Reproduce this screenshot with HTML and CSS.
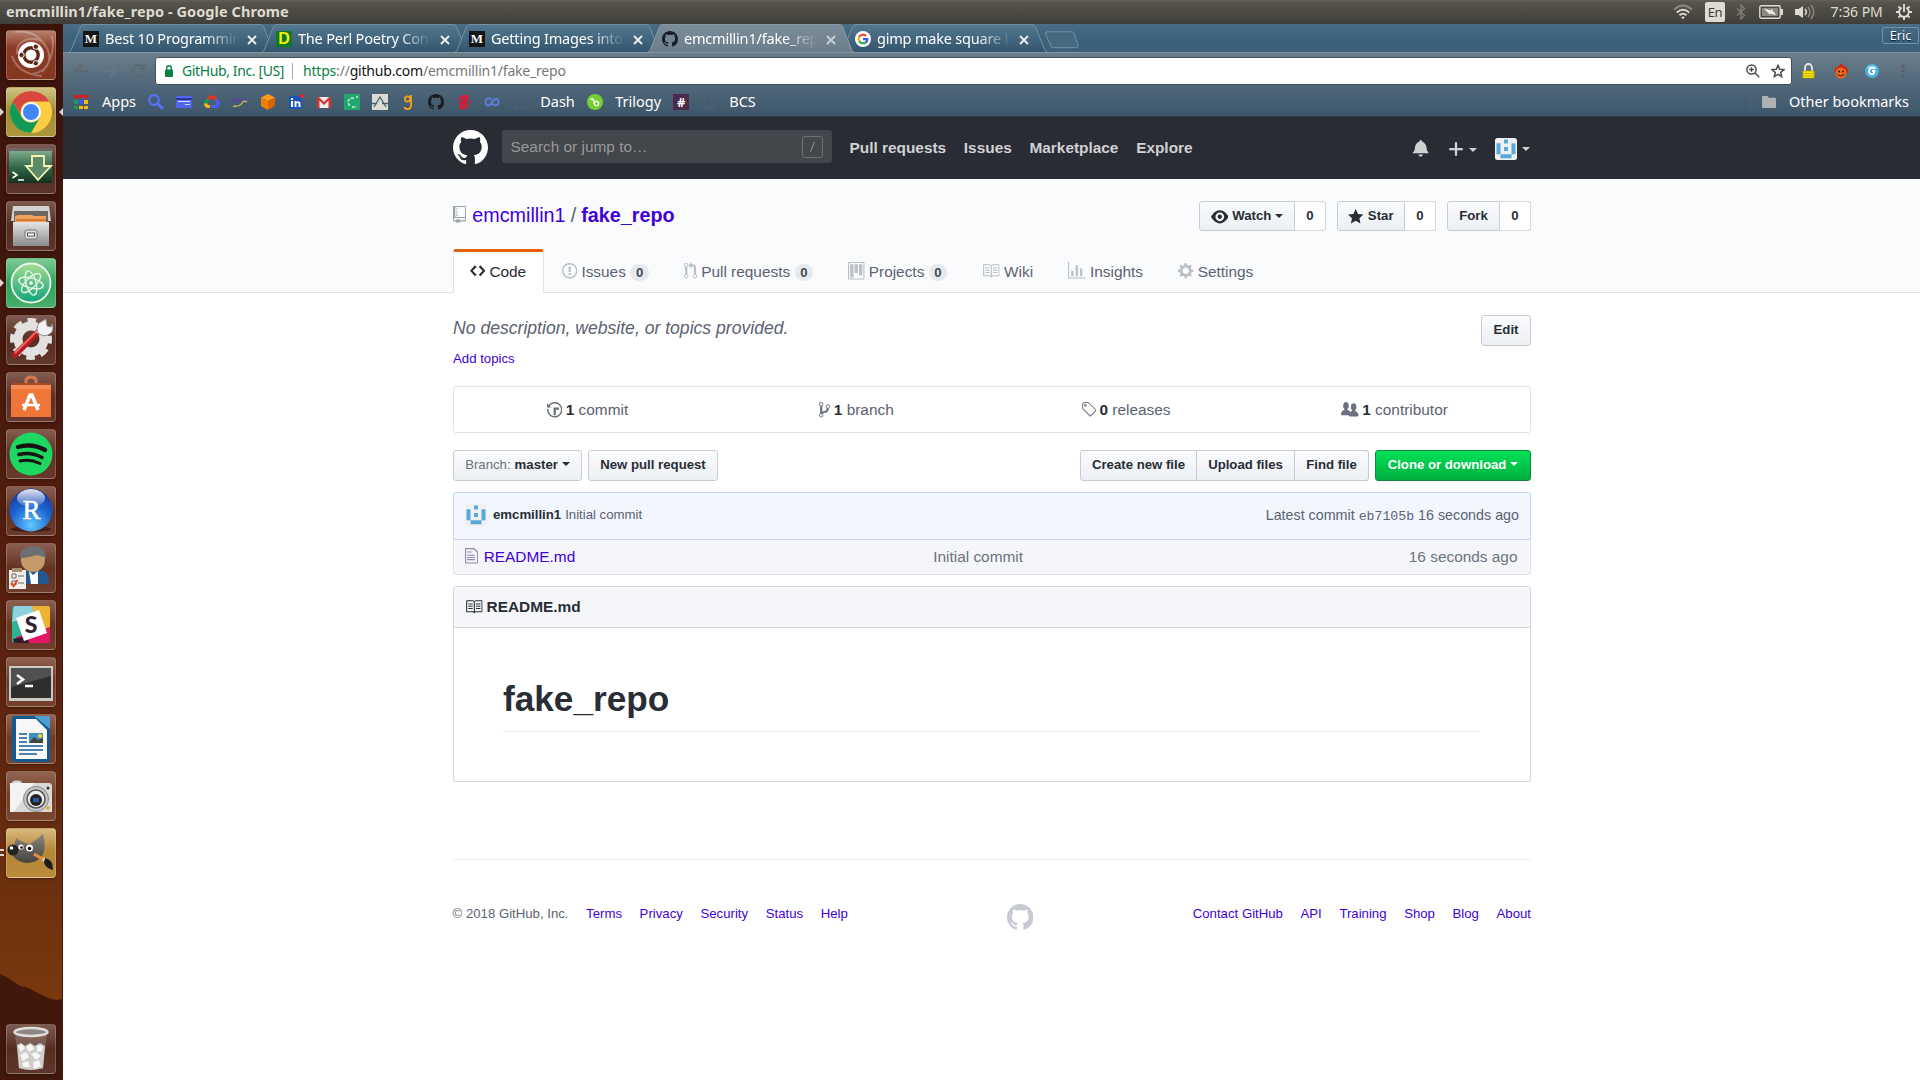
FILE: index.html
```html
<!DOCTYPE html>
<html lang="en">
<head>
<meta charset="utf-8">
<title>emcmillin1/fake_repo</title>
<link rel="stylesheet" href="styles.css">
</head>
<body>
<svg class="sprite" width="0" height="0" aria-hidden="true">
  <defs>
    <linearGradient id="g-tab" x1="0" y1="0" x2="0" y2="1"><stop offset="0" stop-color="#53788f"/><stop offset="1" stop-color="#33556d"/></linearGradient>
    <linearGradient id="g-tab-on" x1="0" y1="0" x2="0" y2="1"><stop offset="0" stop-color="#7b8d99"/><stop offset="1" stop-color="#6c7e8b"/></linearGradient>
    <linearGradient id="g-term" x1="0" y1="0" x2="0" y2="1"><stop offset="0" stop-color="#7fa98d"/><stop offset=".5" stop-color="#2f6a48"/><stop offset="1" stop-color="#16301f"/></linearGradient>
    <linearGradient id="g-grey" x1="0" y1="0" x2="0" y2="1"><stop offset="0" stop-color="#e4e4e4"/><stop offset="1" stop-color="#8c8c8c"/></linearGradient>
    <linearGradient id="g-atom" x1="0" y1="0" x2="0" y2="1"><stop offset="0" stop-color="#a5dd92"/><stop offset="1" stop-color="#11a37c"/></linearGradient>
    <radialGradient id="g-r" cx=".5" cy=".85" r=".8"><stop offset="0" stop-color="#63c8ff"/><stop offset=".6" stop-color="#1c64d0"/><stop offset="1" stop-color="#153a9c"/></radialGradient>
    <linearGradient id="g-shine" x1="0" y1="0" x2="0" y2="1"><stop offset="0" stop-color="#fff" stop-opacity=".9"/><stop offset="1" stop-color="#fff" stop-opacity=".1"/></linearGradient>
    <linearGradient id="g-gimp" x1="0" y1="0" x2="0" y2="1"><stop offset="0" stop-color="#8a867c"/><stop offset="1" stop-color="#45433e"/></linearGradient>
    <symbol id="mark" viewBox="0 0 16 16"><path d="M8 0C3.58 0 0 3.58 0 8c0 3.54 2.29 6.53 5.47 7.59.4.07.55-.17.55-.38 0-.19-.01-.82-.01-1.49-2.01.37-2.53-.49-2.69-.94-.09-.23-.48-.94-.82-1.13-.28-.15-.68-.52-.01-.53.63-.01 1.08.58 1.23.82.72 1.21 1.87.87 2.33.66.07-.52.28-.87.51-1.07-1.78-.2-3.64-.89-3.64-3.95 0-.87.31-1.59.82-2.15-.08-.2-.36-1.02.08-2.12 0 0 .67-.21 2.2.82.64-.18 1.32-.27 2-.27.68 0 1.36.09 2 .27 1.53-1.04 2.2-.82 2.2-.82.44 1.1.16 1.92.08 2.12.51.56.82 1.27.82 2.15 0 3.07-1.87 3.75-3.65 3.95.29.25.54.73.54 1.48 0 1.07-.01 1.93-.01 2.2 0 .21.15.46.55.38A8.013 8.013 0 0 0 16 8c0-4.42-3.58-8-8-8z"/></symbol>
    <symbol id="book" viewBox="0 0 16 16"><path d="M3 5h4v1H3V5zm0 3h4V7H3v1zm0 2h4V9H3v1zm11-5h-4v1h4V5zm0 2h-4v1h4V7zm0 2h-4v1h4V9zm2-6v9c0 .55-.45 1-1 1H9.5l-1 1-1-1H2c-.55 0-1-.45-1-1V3c0-.55.45-1 1-1h5.5l1 1 1-1H15c.55 0 1 .45 1 1zm-8 .5L7.5 3H2v9h6V3.5zm7-.5H9.5l-.5.5V12h6V3z"/></symbol>
    <symbol id="avatar" viewBox="0 0 22 22"><rect width="22" height="22" rx="2.5" fill="#f0f0f0"/><path fill="#57a9db" d="M9 1.500h4v4H9zM9 9h4v4H9zM1.500 5.200h4v11h-4zM16.500 5.200h4v11h-4zM5.500 16.200h11v4h-11z"/></symbol>
    <symbol id="tab-shape" viewBox="0 0 206 28"><path d="M0 28 L2 26.500 L11.500 2.500 Q12.500 .5 14.500 .5 H191.500 Q193.500 .5 194.500 2.500 L204 26.500 L206 28"/></symbol>
    <symbol id="page" viewBox="0 0 11 16"><path d="M.5 1.500h6l4 4v9H.5zM6.500 1.500v4h4" fill="none" stroke="#5b5f63"/></symbol>
  </defs>
</svg>

<header class="panel">
  <span class="panel-title">emcmillin1/fake_repo - Google Chrome</span>
  <div class="tray">
    <svg class="t-wifi" width="20" height="16" viewBox="0 0 20 16" fill="none" stroke-width="1.900"><path stroke="#8b887f" d="M1 5.500Q10-2.500 19 5.500"/><path stroke="#dfdbd2" d="M3.800 8.500Q10 3 16.200 8.500M6.500 11.300Q10 8.300 13.500 11.300"/><path fill="#dfdbd2" d="M8.200 13.200Q10 11.800 11.800 13.200L10 15.200z"/></svg>
    <span class="t-lang">En</span>
    <svg class="t-bt" width="10" height="16" viewBox="0 0 10 16" fill="none" stroke="#85827a" stroke-width="1.300"><path d="M1 4.500L8.500 11.500 5 15V1l3.500 3.500L1 11.500"/></svg>
    <svg class="t-bat" width="24" height="14" viewBox="0 0 24 14"><rect x=".8" y=".8" width="20.400" height="12.400" rx="1.500" fill="none" stroke="#dfdbd2" stroke-width="1.400"/><path fill="#dfdbd2" d="M21.500 4H24v6h-2.500z"/><path fill="#8b887f" d="M3 3h16v8H3z"/><path fill="#efece5" d="M5 3.500l7 2V3.500l5 6.500-6-1.500V10z"/></svg>
    <svg class="t-vol" width="20" height="16" viewBox="0 0 20 16" fill="none" stroke-width="1.500"><path fill="#dfdbd2" d="M0 5h3.500L8 2v12l-4.500-3H0z"/><path stroke="#dfdbd2" d="M10 5q2.500 3 0 6"/><path stroke="#8b887f" d="M13 3q4 5 0 10M16 1q5.500 7 0 14"/></svg>
    <span class="t-time">7:36 PM</span>
    <svg class="t-gear" width="16" height="16" viewBox="0 0 16 16" fill="none" stroke="#dfdbd2" stroke-width="1.900"><path d="M5.800 3.700A4.900 4.900 0 1 0 10.200 3.700"/><path d="M8 0v8M0 8h3M13 8h3M8 13v3M2.400 2.400l2 2M11.600 4.400l2-2M2.400 13.600l2-2M11.600 11.600l2 2"/></svg>
  </div>
</header>

<div class="desktop">
<aside class="launcher">
  <svg class="wall" width="63" height="120" viewBox="0 0 63 120"><path fill="#42180c" d="M0 14q8 3 14 8t12 5q12 6 20 10t17 2V120H0z"/></svg>
  <div class="tile t-dash"><svg viewBox="0 0 50 50"><g fill="none" stroke="#fff" stroke-opacity=".28" stroke-width="2"><path d="M11 24C9 10 28 4 38 13M9 2Q30-2 42 20Q48 40 26 44M6 26Q12 44 36 46M46 6Q50 26 36 42"/></g><circle cx="25" cy="25" r="13" fill="#fff"/><circle cx="25" cy="25" r="7.200" fill="none" stroke="#5b2614" stroke-width="3.400"/><g fill="#5b2614" stroke="#fff" stroke-width="1"><circle cx="15.500" cy="25" r="2.700"/><circle cx="29.800" cy="16.700" r="2.700"/><circle cx="29.800" cy="33.300" r="2.700"/></g></svg></div>
  <div class="tile t-chrome"><svg viewBox="0 0 50 50"><circle cx="25" cy="25" r="21" fill="#fc4"/><path fill="#d9463d" d="M6.800 14.500A21 21 0 0 1 43.200 14.500H25A10.500 10.500 0 0 0 15.500 29.500z"/><path fill="#129a57" d="M6.800 14.500A21 21 0 0 0 25 46L34 30.500A10.500 10.500 0 0 1 16 30.500z"/><circle cx="25" cy="25" r="10" fill="#fff"/><circle cx="25" cy="25" r="8" fill="#4286f5"/></svg></div>
  <div class="tile t-glass"><svg viewBox="0 0 50 50"><rect x="2" y="4" width="45" height="4" fill="#6b6764"/><rect x="3" y="7" width="43" height="32" fill="url(#g-term)"/><path d="M26 12h12v10h7L32 36 20 22h6z" fill="#5e8a68" stroke="#f5f7b4" stroke-width="1.800"/><path d="M6.500 28l4.500 3-4.500 3M12 36h6" fill="none" stroke="#fff" stroke-width="1.600"/></svg></div>
  <div class="tile t-glass"><svg viewBox="0 0 50 50"><path fill="#d2d2d2" d="M7 5h36l2 15H5z"/><path fill="#6d6763" d="M8 10h34v11H8z"/><path fill="#f0a35f" d="M9 15l3-1h14l2 1h12v6H9z"/><path fill="#d9792f" d="M10 18h30v2H10z"/><path fill="url(#g-grey)" d="M7 21h36v24H7z"/><rect x="19" y="29" width="12" height="9" rx="2" fill="#ddd" stroke="#777"/><rect x="21.500" y="32" width="7" height="3" fill="#fff" stroke="#555"/></svg></div>
  <div class="tile t-atom"><svg viewBox="0 0 50 50"><circle cx="25" cy="25" r="19.500" fill="url(#g-atom)" stroke="#e8f5ea" stroke-width="1.800"/><g fill="none" stroke="#e4f6e5" stroke-width="1.400"><ellipse cx="25" cy="25" rx="12.500" ry="5" transform="rotate(15 25 25)"/><ellipse cx="25" cy="25" rx="12.500" ry="5" transform="rotate(75 25 25)"/><ellipse cx="25" cy="25" rx="12.500" ry="5" transform="rotate(135 25 25)"/></g><circle cx="25" cy="25" r="1.800" fill="#fff"/></svg></div>
  <div class="tile t-glass"><svg viewBox="0 0 50 50"><circle cx="25" cy="24" r="13" fill="none" stroke="#e3e1df" stroke-width="9"/><circle cx="25" cy="24" r="18.500" fill="none" stroke="#e3e1df" stroke-width="5" stroke-dasharray="8.500 6.030" stroke-dashoffset="4"/><path d="M9 40L32 17" stroke="#b71c22" stroke-width="6" stroke-linecap="round"/><path d="M9 38L30 17" stroke="#ee6a63" stroke-width="1.800"/><path d="M31 18l5-5" stroke="#c9c9c9" stroke-width="4.500"/><path fill="#f2f2f2" stroke="#8c8c8c" d="M33 8l7-4 1 7 4 1 1-3q3 8-4 11-5 2-9-1-4-5 0-11z"/></svg></div>
  <div class="tile t-glass"><svg viewBox="0 0 50 50"><path fill="none" stroke="#d57851" stroke-width="3" d="M20 16V9q0-4 5-4t5 4v7"/><path fill="#a84a24" d="M6 11h38v4H6z"/><path fill="#ef7538" d="M5 15h40v30H5z"/><path fill="#f58e55" d="M5 13h40v4H5z"/><path fill="none" stroke="#fff" stroke-width="3.500" d="M18 38l6-15h2l6 15"/><path stroke="#fff" stroke-width="2.500" d="M16 33h18"/></svg></div>
  <div class="tile t-glass"><svg viewBox="0 0 50 50"><circle cx="25" cy="25" r="21.500" fill="#1ed760"/><g fill="none" stroke="#191414" stroke-linecap="round"><path stroke-width="4.400" d="M12 18q14-4 27 3"/><path stroke-width="3.600" d="M13 25.500q12-3 23 3"/><path stroke-width="3" d="M14 32q10-2.500 20 2.500"/></g></svg></div>
  <div class="tile t-glass"><svg viewBox="0 0 50 50"><ellipse cx="25" cy="43" rx="20" ry="3" fill="#2a0f08" opacity=".6"/><circle cx="25" cy="24" r="21.500" fill="url(#g-r)"/><ellipse cx="25" cy="12" rx="14" ry="9" fill="url(#g-shine)"/><text x="25.500" y="33" text-anchor="middle" class="glyph-r">R</text></svg></div>
  <div class="tile t-glass"><svg viewBox="0 0 50 50"><path fill="#22588f" d="M14 41q-1-12 11-14h8q11 1 10 14z"/><path fill="#fff" d="M23 28l4 4 5-4v13h-7z"/><circle cx="27" cy="17" r="12" fill="#c49a68"/><path fill="#6c7072" d="M14 15Q14 3 27 3t13 12q-7-4-13-2t-13 2z"/><path fill="#f1eeea" d="M3 27h17v19H3z"/><path fill="#a8906c" d="M6 25h10v4H6z"/><path fill="none" stroke="#666" d="M6 31h4v4H6zM12 33h6M12 40h6M6 38h4v4H6z"/><path fill="none" stroke="#e0501f" stroke-width="2" d="M5 40l2.500 3 4-6"/></svg></div>
  <div class="tile t-glass"><svg viewBox="0 0 50 50"><path fill="#2fb391" d="M6 7h20l4 36H8q-2 0-2-2z"/><path fill="#8ed2e0" d="M8 6h18l3 10-23 6z"/><path fill="#edb431" d="M26 6h16q2 0 2 2v26l-10 4z"/><path fill="#e01765" d="M12 43l-2-6 34-10v14q0 2-2 2z"/><path fill="#35192f" d="M7 39l14-3 2 7H8z"/><path fill="#fff" d="M12 18l23-8 8 23-23 8z" transform="translate(-2 0)"/><text x="25" y="33" text-anchor="middle" class="glyph-s">S</text></svg></div>
  <div class="tile t-glass"><svg viewBox="0 0 50 50"><rect x="3" y="9" width="44" height="35" fill="#c9c9c5"/><rect x="5" y="11" width="40" height="30" fill="#2f2f2f"/><path fill="#676767" d="M5 11h40v8L5 30z" opacity=".6"/><path fill="none" stroke="#fff" stroke-width="2.500" d="M11 18l6 4.500-6 4.500M19 29h8"/></svg></div>
  <div class="tile t-glass"><svg viewBox="0 0 50 50"><path fill="#145a92" d="M8 2h25l11 11v33q0 2-2 2H8q-2 0-2-2V4q0-2 2-2z"/><path fill="#f8f8f8" d="M10 5h20l11 11v29H10z"/><path fill="#4e9fd1" d="M28 2h16v13z"/><path stroke="#145a92" stroke-width="1.700" d="M13 20h8M13 24h8M13 28h8M13 32h24M13 36h24M13 40h18"/><path fill="#3b91c7" d="M23 19h14v10H23z"/><path fill="#46443b" d="M23 29l5-6 4 3 5-2v5z"/><circle cx="34" cy="22" r="2" fill="#ffd320"/></svg></div>
  <div class="tile t-glass"><svg viewBox="0 0 50 50"><ellipse cx="11" cy="12" rx="5" ry="2.500" fill="#ddd" stroke="#999"/><path fill="#d9d9d7" d="M4 12h40l2 2v27H4z"/><path fill="#f3f3f2" d="M4 12h24L8 41H4z"/><circle cx="30" cy="28" r="12.500" fill="#c5c5c5" stroke="#8a8a8a"/><circle cx="30" cy="28" r="9" fill="#eee" stroke="#555" stroke-width="1.500"/><circle cx="30" cy="29" r="6" fill="#222"/><rect x="27" y="27" width="6" height="4" fill="#2c56a8"/><circle cx="42" cy="17" r="1.500" fill="#333"/><circle cx="42" cy="37" r="1.800" fill="#eaa12c"/></svg></div>
  <div class="tile t-gimp"><svg viewBox="0 0 50 50"><path fill="url(#g-gimp)" d="M10 10q6 5 14 6Q33 10 37 6q4 14-1 22-5 7-16 7-10-1-14-9z"/><circle cx="7" cy="22" r="5.500" fill="#222"/><circle cx="5.500" cy="20" r="1.800" fill="#fff"/><circle cx="15" cy="19" r="2.600" fill="#fff"/><circle cx="23.500" cy="20" r="3.500" fill="#fff"/><circle cx="15.500" cy="19.500" r="1.300"/><circle cx="23.500" cy="20.500" r="1.800"/><path stroke="#ed8d38" stroke-width="3" d="M28 26l12 7"/><path stroke="#ddd" stroke-width="4" d="M37 31l4 2"/><path fill="#1d1d1d" d="M39 30q8 1 8 12-8-2-9-8z"/></svg></div>
  <div class="tile t-glass t-trash"><svg viewBox="0 0 50 50"><path fill="#b9b0ac" fill-opacity=".3" d="M9 10h32l-4 35H13z"/><path fill="#cfccc9" d="M11 21l4-2 4 3 5-3 5 3 5-3 5 3-2 22q-12 4-24 0z"/><path fill="#f6f6f5" d="M12 22l4-2 3 4-4 4zM20 23l5-3 3 5-5 3zM31 21l6 1-1 5-5 1zM14 31l6-3 3 5-6 4zM25 30l5-2 5 4-5 4zM16 39l6-2 2 6-7 0zM27 38l6-2 2 6-7 3z"/><ellipse cx="25" cy="8" rx="16.500" ry="4" fill="#8d8582" stroke="#dedede" stroke-width="2.500"/></svg></div>
  <i class="pip pip-chrome"></i><i class="pip pip-chrome-on"></i><i class="pip pip-atom"></i><i class="pip-two"></i>
</aside>

<div class="window">
  <div class="tabs">
    <div class="tab"><svg class="shape"><use href="#tab-shape"/></svg><span class="fav medium">M</span><span class="label">Best 10 Programming</span><svg class="close" viewBox="0 0 8 8"><path d="M0 0l8 8M8 0L0 8"/></svg></div>
    <div class="tab"><svg class="shape"><use href="#tab-shape"/></svg><span class="fav perl">D</span><span class="label">The Perl Poetry Contest</span><svg class="close" viewBox="0 0 8 8"><path d="M0 0l8 8M8 0L0 8"/></svg></div>
    <div class="tab"><svg class="shape"><use href="#tab-shape"/></svg><span class="fav medium">M</span><span class="label">Getting Images into</span><svg class="close" viewBox="0 0 8 8"><path d="M0 0l8 8M8 0L0 8"/></svg></div>
    <div class="tab on"><svg class="shape"><use href="#tab-shape"/></svg><svg class="fav" fill="#1b1f23"><use href="#mark"/></svg><span class="label">emcmillin1/fake_repo</span><svg class="close" viewBox="0 0 8 8"><path d="M0 0l8 8M8 0L0 8"/></svg></div>
    <div class="tab"><svg class="shape"><use href="#tab-shape"/></svg><svg class="fav" viewBox="0 0 16 16"><circle cx="8" cy="8" r="8" fill="#fff"/><g fill="none" stroke-width="2.200"><path stroke="#ea4335" d="M4.200 6A4.300 4.300 0 0 1 11 4.900"/><path stroke="#fbbc05" d="M4.200 10.100a4.300 4.300 0 0 1 0-4.200"/><path stroke="#34a853" d="M11 11.100A4.300 4.300 0 0 1 4.200 10"/><path stroke="#4b50f0" d="M8 8.200h4.300q0 2-1.500 3.200"/></g></svg><span class="label">gimp make square brush</span><svg class="close" viewBox="0 0 8 8"><path d="M0 0l8 8M8 0L0 8"/></svg></div>
    <svg class="newtab" width="36" height="18" viewBox="0 0 36 18"><path d="M3 .8h25q1.500 0 2 1.500l4 11.700q.8 2.700-1.500 2.700H9q-1.500 0-2-1.500L1.500 3Q1 .8 3 .8z" fill="#456a80" stroke="#7193a5"/></svg>
    <span class="profile">Eric</span>
  </div>

  <div class="toolbar">
    <div class="nav-row">
      <svg class="nav-ic" width="15" height="16" viewBox="0 0 15 16"><path d="M14 8H2M8 1.500L1.500 8 8 14.500"/></svg>
      <svg class="nav-ic faint" width="15" height="16" viewBox="0 0 15 16"><path d="M1 8h12M7 1.500L13.500 8 7 14.500"/></svg>
      <svg class="nav-ic" width="15" height="16" viewBox="0 0 15 16"><path d="M13 10.500A6 6 0 1 1 12 4M13.500 1v5h-5"/></svg>
      <div class="omnibox">
        <svg width="8" height="12" viewBox="0 0 8 12"><rect y="4.500" width="8" height="7.500" rx="1" fill="#0b8043"/><path d="M1.700 5V3a2.300 2.300 0 0 1 4.600 0v2" fill="none" stroke="#0b8043" stroke-width="1.400"/></svg>
        <span class="cert">GitHub, Inc. [US]</span><i class="bar"></i>
        <span class="url"><b class="s">https</b>://<b class="h">github.com</b>/emcmillin1/fake_repo</span>
        <svg class="zoom" width="14" height="14" viewBox="0 0 14 14" fill="none" stroke="#4b4b4b" stroke-width="1.500"><circle cx="5.500" cy="5.500" r="4.600"/><path d="M9 9l4.300 4.300M3.200 5.500h4.600M5.500 3.200v4.600"/></svg>
        <svg width="14" height="14" viewBox="0 0 14 14" fill="none" stroke="#4b4b4b" stroke-width="1.500"><path d="M7 1.300l1.700 3.900 4.200.4-3.200 2.800 1 4.200L7 10.400l-3.700 2.200 1-4.200L1.100 5.600l4.200-.4z"/></svg>
      </div>
      <svg class="ext e1" width="13" height="16" viewBox="0 0 13 16"><path d="M3 8V4.500a3.500 3.500 0 0 1 7 0V8" fill="none" stroke="#e8e8e8" stroke-width="1.800"/><path fill="#fde800" stroke="#a89300" stroke-width=".6" d="M.8 8h11.400v7H.8z"/><path stroke="#c9ad00" d="M1 10.500h11M1 12.800h11"/></svg>
      <svg class="ext e2" width="14" height="16" viewBox="0 0 14 16"><path fill="#d2230d" d="M1 9Q0 4 3 4q1 1 1-1 2 0 3-3 1 3 3 3l2 1q3 3 1 7z"/><circle cx="7" cy="10" r="5.500" fill="#ee6b1a"/><circle cx="5" cy="8.500" r="1" fill="#311"/><circle cx="9" cy="8.500" r="1" fill="#311"/><path fill="none" stroke="#311" d="M3.500 11.500q3.500 3 7 0"/></svg>
      <svg class="ext e3" width="14" height="14" viewBox="0 0 14 14"><circle cx="7" cy="7" r="7" fill="#4ab1e2"/><path fill="#9bd8f4" d="M1.500 4.500a6.500 6.500 0 0 1 11 0z"/><path fill="none" stroke="#fff" stroke-width="1.800" d="M10 4.500Q5 2.500 4 7q0 4 4.500 3l1-3H7"/></svg>
      <svg class="ext e4" width="4" height="14" viewBox="0 0 4 14" fill="#5b5f65"><circle cx="2" cy="2" r="1.600"/><circle cx="2" cy="7" r="1.600"/><circle cx="2" cy="12" r="1.600"/></svg>
    </div>
    <div class="marks">
      <svg class="apps" width="14" height="14" viewBox="0 0 14 14"><path fill="#f01010" d="M0 0h4v3H0zM5 0h4v3H5zM10 0h4v3h-4z"/><path fill="#14a04e" d="M0 5h4v4H0zM0 11h4v3H0z"/><path fill="#3d55ff" d="M5 5h4v4H5z"/><path fill="#f4b90e" d="M10 5h4v4h-4zM10 11h4v3h-4zM5 11h4v3H5z"/></svg>
      <span class="w-apps">Apps</span>
      <svg viewBox="0 0 16 16" fill="none" stroke="#5870ff"><circle cx="6" cy="6" r="4.800" stroke-width="2.200"/><path stroke-width="2.800" d="M9.800 9.800L15 15"/></svg>
      <svg viewBox="0 0 16 16"><path fill="#5465ee" d="M0 2h16v12H0z"/><path fill="#2d3694" d="M0 4h16v2H0z"/><path fill="#dde" d="M2 7h12v1H2zM9 10h5v1H9z"/></svg>
      <svg viewBox="0 0 16 16" fill="none" stroke-width="3.200"><path stroke="#ea2f25" d="M4 6q1.500-4 5-3 2 .5 3 3"/><path stroke="#f4b90e" d="M6 12.500H4.500Q1.500 12 1.800 9"/><path stroke="#14a04e" d="M1.800 9.500q0-3 3-3"/><path stroke="#4c5cff" d="M7 12.500h5q2.500-1 2.300-3.500-.5-2.500-2.800-2.500"/></svg>
      <svg viewBox="0 0 16 16" fill="none"><path stroke="#564a9c" stroke-width="2.200" d="M0 5.500h10q4-1 4 1M2 8l7-1"/><path stroke="#c2b54a" stroke-width="1.400" d="M1 12q7 1 9-3 2-3 5-1"/></svg>
      <svg viewBox="0 0 16 16"><path fill="#ff9a20" d="M8 0l7 3.500L8 7 1 3.500z"/><path fill="#f08000" d="M1 3.500L8 7v9l-7-4z"/><path fill="#d96400" d="M15 3.500L8 7v9l7-4z"/></svg>
      <svg viewBox="0 0 16 16"><path fill="#1c55b4" d="M1 2h13v13H1z"/><path fill="#fff" d="M3 7h2v6H3zM3 4h2v2H3zM6.500 7h2v1q3-2 4 1v4h-2V9.500q-1-1-2 0V13h-2z"/><circle cx="14" cy="2" r="2" fill="#e22"/></svg>
      <svg viewBox="0 0 16 16"><path fill="#f1eeee" d="M1 3h14v11H1z"/><path fill="#d3312a" d="M1 3h2l5 5 5-5h2v11h-2.500V6.500L8 11 3.500 6.500V14H1z"/></svg>
      <svg viewBox="0 0 16 16"><path fill="#20a66e" d="M0 0h16v16H0z"/><path fill="none" stroke="#c7efdf" stroke-width="1.500" stroke-dasharray="3 1.500" d="M10 4Q4 4 4 9l2 3M12 3h2M8 13h5"/></svg>
      <svg viewBox="0 0 16 16"><path fill="#dcdcd4" d="M0 0h16v16H0z"/><path fill="none" stroke="#49616f" stroke-width="1.300" d="M2 13L8 3l6 10M0 9.500h5M10 9.500h6"/></svg>
      <svg viewBox="0 0 16 16" fill="none" stroke="#f0a01c"><circle cx="7.500" cy="5" r="2.600" stroke-width="1.900"/><path stroke-width="1.900" d="M11 1v10q0 4-3.500 4-3 0-3-2"/></svg>
      <svg viewBox="0 0 16 16" fill="#191d21"><use href="#mark"/></svg>
      <svg viewBox="0 0 16 16" fill="none" stroke="#f0102b" stroke-linecap="round"><path stroke-width="2.600" d="M6 6q0-4 3-4 4 1 1 5l-5 3q-1 4 2 4 3-1 3-4"/><path stroke-width=".8" d="M1.500 9q0-5 3-7M14.500 6q1 5-4 8.500"/></svg>
      <svg viewBox="0 0 16 16" fill="none" stroke="#5d7fdc" stroke-width="2"><path d="M7.500 5.500Q2 2 1.500 8q.5 5.500 5 2.500l3.500-5q4.500-2 4.500 2.500 0 5-6.500 2"/></svg>
      <svg class="pg"><use href="#page"/></svg>
      <span class="w-dash">Dash</span>
      <svg viewBox="0 0 16 16"><circle cx="8" cy="8" r="8" fill="#75d02f"/><path fill="none" stroke="#fff" stroke-width="1.200" d="M3 5l4 1v4M5 4l2 3"/><circle cx="9.500" cy="9.500" r="2.200" fill="none" stroke="#fff" stroke-width="1.200"/></svg>
      <span class="w-tril">Trilogy</span>
      <span class="hash">#</span>
      <svg class="pg"><use href="#page"/></svg>
      <span class="w-bcs">BCS</span>
      <i class="sep"></i>
      <svg class="folder" width="14" height="12" viewBox="0 0 14 12"><path fill="#b0b0b0" d="M1 0h4.500L7 1.700h6q1 0 1 1V11q0 1-1 1H1q-1 0-1-1V1q0-1 1-1z"/></svg>
      <span class="w-other">Other bookmarks</span>
    </div>
  </div>

  <div class="gh-head">
    <svg class="logo" width="35" height="35" fill="#fff"><use href="#mark"/></svg>
    <div class="search"><span>Search or jump to…</span><svg width="21" height="22" viewBox="0 0 21 22" fill="none"><rect x=".5" y=".5" width="20" height="21" rx="2.500" stroke="#6d7073"/><path d="M8.500 15.500l4-9.500" stroke="#999b9d"/></svg></div>
    <nav><a>Pull requests</a><a>Issues</a><a>Marketplace</a><a>Explore</a></nav>
    <svg class="bell" width="16.500" height="17.600" viewBox="0 0 15 16"><path d="M14 12v1H0v-1l.73-.58c.77-.77.81-2.55 1.19-4.420C2.690 3.230 6 2 6 2c0-.55.45-1 1-1s1 .45 1 1c0 0 3.390 1.230 4.160 5 .38 1.880.42 3.660 1.190 4.420l.66.58H14zm-7 4c1.110 0 2-.89 2-2H5c0 1.110.89 2 2 2z"/></svg>
    <svg class="plus" width="14" height="18" viewBox="0 0 12 16"><path d="M12 9H7v5H5V9H0V7h5V2h2v5h5v2z"/></svg><i class="caret c1"></i>
    <svg class="me" width="22" height="22"><use href="#avatar"/></svg><i class="caret c2"></i>
  </div>

  <div class="repo-head">
    <div class="wrap title-row">
      <svg width="13.200" height="17.600" viewBox="0 0 12 16" fill="#9a9fa8"><path d="M4 9H3V8h1v1zm0-3H3v1h1V6zm0-2H3v1h1V4zm0-2H3v1h1V2zm8-1v12c0 .55-.45 1-1 1H6v2l-1.500-1.500L3 16v-2H1c-.55 0-1-.45-1-1V1c0-.55.45-1 1-1h10c.55 0 1 .45 1 1zm-1 10H1v2h2v-1h3v1h5v-2zm0-10H2v9h9V1z"/></svg>
      <h1><a>emcmillin1</a><i>/</i><a class="strong">fake_repo</a></h1>
      <div class="social">
        <div class="group"><span class="btn w-watch"><svg width="17.600" height="17.600" viewBox="0 0 16 16"><path d="M8.060 2C3 2 0 8 0 8s3 6 8.060 6C13 14 16 8 16 8s-3-6-7.940-6zM8 12c-2.200 0-4-1.780-4-4 0-2.200 1.800-4 4-4 2.220 0 4 1.800 4 4 0 2.220-1.780 4-4 4zm2-4c0 1.110-.89 2-2 2-1.110 0-2-.89-2-2 0-1.110.89-2 2-2 1.110 0 2 .89 2 2z"/></svg>Watch<i class="caret"></i></span><span class="num">0</span></div>
        <div class="group"><span class="btn w-star"><svg width="15.400" height="17.600" viewBox="0 0 14 16"><path d="M14 6l-4.900-.64L7 1 4.900 5.360 0 6l3.600 3.260L2.670 14 7 11.670 11.330 14l-.93-4.740L14 6z"/></svg>Star</span><span class="num">0</span></div>
        <div class="group"><span class="btn w-fork">Fork</span><span class="num">0</span></div>
      </div>
    </div>
    <div class="wrap repo-nav">
      <a class="on"><svg width="15.400" height="17.600" viewBox="0 0 14 16"><path d="M9.500 3L8 4.500 11.500 8 8 11.500 9.500 13 14 8 9.500 3zm-5 0L0 8l4.500 5L6 11.500 2.500 8 6 4.500 4.500 3z"/></svg>Code</a>
      <a><svg width="15.400" height="17.600" viewBox="0 0 14 16"><path d="M7 2.300c3.140 0 5.700 2.560 5.700 5.700s-2.560 5.700-5.700 5.700A5.710 5.710 0 0 1 1.300 8c0-3.140 2.560-5.700 5.700-5.700zM7 1C3.140 1 0 4.140 0 8s3.140 7 7 7 7-3.140 7-7-3.140-7-7-7zm1 3H6v5h2V4zm0 6H6v2h2v-2z"/></svg>Issues<b>0</b></a>
      <a><svg width="13.200" height="17.600" viewBox="0 0 12 16"><path d="M11 11.280V5c-.03-.78-.34-1.470-.94-2.060C9.460 2.350 8.780 2.030 8 2H7V0L4 3l3 3V4h1c.27.02.48.11.69.31.21.2.3.42.31.69v6.280A1.993 1.993 0 0 0 10 15a1.993 1.993 0 0 0 1-3.720zm-1 2.920c-.66 0-1.200-.55-1.200-1.200 0-.65.55-1.200 1.200-1.200.65 0 1.200.55 1.200 1.200 0 .65-.55 1.200-1.200 1.200zM4 3c0-1.110-.89-2-2-2a1.993 1.993 0 0 0-1 3.720v6.560A1.993 1.993 0 0 0 2 15a1.993 1.993 0 0 0 1-3.720V4.720c.59-.34 1-.98 1-1.720zm-.8 10c0 .66-.55 1.200-1.200 1.200-.65 0-1.200-.55-1.200-1.200 0-.65.55-1.200 1.200-1.200.65 0 1.200.55 1.200 1.200zM2 4.200C1.340 4.200.8 3.650.8 3c0-.65.55-1.200 1.200-1.200.65 0 1.200.55 1.200 1.200 0 .65-.55 1.200-1.200 1.200z"/></svg>Pull requests<b>0</b></a>
      <a><svg width="16.500" height="17.600" viewBox="0 0 15 16"><path fill-rule="evenodd" d="M10 12h3V2h-3v10zm-4-2h3V2H6v8zm-4 4h3V2H2v12zm-1 1h13V1H1v14zM14 0H1a1 1 0 0 0-1 1v14a1 1 0 0 0 1 1h13a1 1 0 0 0 1-1V1a1 1 0 0 0-1-1z"/></svg>Projects<b>0</b></a>
      <a><svg width="17.600" height="17.600"><use href="#book"/></svg>Wiki</a>
      <a><svg width="17.600" height="17.600" viewBox="0 0 16 16"><path d="M16 14v1H0V0h1v14h15zM5 13H3V8h2v5zm4 0H7V3h2v10zm4 0h-2V6h2v7z"/></svg>Insights</a>
      <a><svg width="15.400" height="17.600" viewBox="0 0 14 16"><path d="M14 8.770v-1.600l-1.940-.64-.45-1.090.88-1.840-1.130-1.130-1.810.91-1.090-.45-.69-1.920h-1.600l-.63 1.940-1.110.45-1.840-.88-1.130 1.130.91 1.810-.45 1.090L0 7.230v1.590l1.940.64.45 1.090-.88 1.840 1.130 1.130 1.810-.91 1.090.45.69 1.920h1.590l.63-1.940 1.110-.45 1.840.88 1.130-1.130-.92-1.810.47-1.090L14 8.750v.02zM7 11c-1.660 0-3-1.340-3-3s1.340-3 3-3 3 1.340 3 3-1.340 3-3 3z"/></svg>Settings</a>
    </div>
  </div>

  <main class="wrap">
    <div class="desc"><div><p>No description, website, or topics provided.</p><a>Add topics</a></div><span class="btn edit">Edit</span></div>
    <div class="stats">
      <div><svg width="15.400" height="17.600" viewBox="0 0 14 16"><path d="M8 13H6V6h5v2H8v5zM7 1C4.810 1 2.870 2.020 1.590 3.590L0 2v4h4L2.500 4.500C3.550 3.170 5.170 2.300 7 2.300c3.140 0 5.700 2.560 5.700 5.700s-2.560 5.700-5.700 5.700A5.710 5.710 0 0 1 1.300 8c0-.34.03-.67.09-1H.08C.03 7.330 0 7.660 0 8c0 3.860 3.140 7 7 7s7-3.140 7-7-3.140-7-7-7z"/></svg><b>1</b> commit</div>
      <div><svg width="11" height="17.600" viewBox="0 0 10 16"><path d="M10 5c0-1.110-.89-2-2-2a1.993 1.993 0 0 0-1 3.720v.3c-.02.52-.23.98-.63 1.380-.4.4-.86.61-1.380.63-.83.02-1.480.16-2 .45V4.720a1.993 1.993 0 0 0-1-3.720C.88 1 0 1.890 0 3a2 2 0 0 0 1 1.720v6.560c-.59.35-1 .99-1 1.720 0 1.110.89 2 2 2 1.110 0 2-.89 2-2 0-.53-.2-1-.53-1.360.09-.06.48-.41.59-.47.25-.11.56-.17.94-.17 1.050-.05 1.950-.45 2.750-1.250S8.950 7.770 9 6.730h-.02C9.590 6.370 10 5.730 10 5zM2 1.800c.66 0 1.200.55 1.200 1.200 0 .65-.55 1.200-1.200 1.200C1.350 4.200.8 3.650.8 3c0-.65.55-1.200 1.200-1.200zm0 12.410c-.66 0-1.200-.55-1.200-1.200 0-.65.55-1.200 1.200-1.200.65 0 1.200.55 1.200 1.200 0 .65-.55 1.200-1.200 1.200zm6-8c-.66 0-1.200-.55-1.200-1.200 0-.65.55-1.200 1.200-1.200.65 0 1.200.55 1.200 1.200 0 .65-.55 1.200-1.200 1.200z"/></svg><b>1</b> branch</div>
      <div><svg width="15.400" height="17.600" viewBox="0 0 14 16"><path d="M7.730 1.730C7.260 1.260 6.620 1 5.960 1H3.500C2.130 1 1 2.130 1 3.500v2.470c0 .66.27 1.300.73 1.770l6.060 6.060c.39.39 1.020.39 1.410 0l4.590-4.590a.996.996 0 0 0 0-1.410L7.730 1.730zM2.380 7.090c-.31-.3-.47-.7-.47-1.130V3.500c0-.88.72-1.590 1.590-1.590h2.470c.42 0 .83.16 1.130.47l6.140 6.130-4.730 4.730-6.130-6.150zM3.010 3h2v2H3V3h.01z"/></svg><b>0</b> releases</div>
      <div><svg width="17.600" height="17.600" viewBox="0 0 16 16"><path d="M16 12.999c0 .439-.45 1-1 1H7.995c-.539 0-.994-.447-.995-.999H1c-.54 0-1-.561-1-1 0-2.634 3-4 3-4s.229-.409 0-1c-.841-.621-1.058-.59-1-3 .058-2.419 1.367-3 2.500-3s2.442.58 2.500 3c.058 2.410-.159 2.379-1 3-.229.59 0 1 0 1s1.549.711 2.420 2.088C9.196 9.369 10 8.999 10 8.999s.229-.409 0-1c-.841-.62-1.058-.59-1-3 .058-2.419 1.367-3 2.500-3s2.437.581 2.495 3c.059 2.410-.158 2.380-1 3-.229.59 0 1 0 1s3.005 1.366 3.005 4z"/></svg><b>1</b> contributor</div>
    </div>
    <div class="actions">
      <span class="btn w-branch"><em>Branch:</em>master<i class="caret"></i></span>
      <span class="btn w-newpr">New pull request</span>
      <div class="group files"><span class="btn w-create">Create new file</span><span class="btn w-upload">Upload files</span><span class="btn w-find">Find file</span></div>
      <span class="btn green">Clone or download<i class="caret"></i></span>
    </div>
    <div class="commit"><svg width="22" height="22"><use href="#avatar"/></svg><b>emcmillin1</b><span>Initial commit</span><span class="latest">Latest commit <code>eb7105b</code> 16 seconds ago</span></div>
    <div class="file"><svg width="13.200" height="17.600" viewBox="0 0 12 16"><path d="M6 5H2V4h4v1zM2 8h7V7H2v1zm0 2h7V9H2v1zm0 2h7v-1H2v1zm10-7.500V14c0 .55-.45 1-1 1H1c-.55 0-1-.45-1-1V2c0-.55.45-1 1-1h7.500L12 4.500zM11 5L8 2H1v12h10V5z"/></svg><a>README.md</a><span class="msg">Initial commit</span><span class="age">16 seconds ago</span></div>
    <section class="readme">
      <h3><svg width="17.600" height="17.600"><use href="#book"/></svg>README.md</h3>
      <article><h2>fake_repo</h2></article>
    </section>
  </main>

  <footer class="wrap">
    <div class="links"><span>© 2018 GitHub, Inc.</span><a>Terms</a><a>Privacy</a><a>Security</a><a>Status</a><a>Help</a></div>
    <svg width="26.400" height="26.400" fill="#c6c9d1"><use href="#mark"/></svg>
    <div class="links right"><a>Contact GitHub</a><a>API</a><a>Training</a><a>Shop</a><a>Blog</a><a>About</a></div>
  </footer>
</div>
</div>
</body>
</html>
```
FILE: styles.css
```css
* { box-sizing: border-box; }
html, body { margin: 0; height: 100%; }
body {
  display: flex;
  flex-direction: column;
  width: 1920px;
  height: 1080px;
  overflow: hidden;
  background: #fff;
  color: #292d35;
  font: 15.4px/23px "Liberation Sans", Arial, sans-serif;
}
svg { display: block; flex: none; }
i { flex: none; }
.sprite { position: absolute; }

/* Top panel */
.panel {
  display: flex;
  align-items: center;
  height: 24px;
  flex: none;
  padding-left: 6px;
  background: linear-gradient(#625f52, #55534b 3px, #3f3e39);
  color: #dfdbd2;
  font-family: "Noto Sans", "Open Sans", sans-serif;
}
.panel-title { font-size: 14.5px; font-weight: 700; letter-spacing: .08px; line-height: 22px; padding-bottom: 2px; white-space: nowrap; }
.tray { display: flex; align-items: center; margin-left: auto; width: 247px; height: 24px; }
.t-lang { width: 20px; height: 20px; margin-left: 12px; border-radius: 2px; background: #dfdbd2; color: #3c3b37; font-size: 13px; line-height: 20px; text-align: center; letter-spacing: -.3px; }
.t-bt { margin-left: 11px; }
.t-bat { margin-left: 13px; }
.t-vol { margin-left: 12px; }
.t-time { width: 53px; margin-left: 15.5px; font-size: 14px; line-height: 22px; white-space: nowrap; letter-spacing: -.05px; }
.t-gear { margin-left: 12.5px; }

/* Launcher */
.desktop { display: flex; flex: 1; min-height: 0; }
.launcher {
  position: relative;
  display: flex;
  flex-direction: column;
  gap: 7px;
  width: 63px;
  flex: none;
  padding: 6px 0 6px 6px;
  border-right: 1px solid #3a160d;
  background: linear-gradient(#3c130b, #42180d 25%, #541e0e 50%, #622910 72%, #79380d 92%);
}
.wall { position: absolute; left: 0; bottom: 0; }
.tile {
  position: relative;
  width: 50px;
  height: 50px;
  border: 1px solid rgba(255, 255, 255, .2);
  border-radius: 4px;
  box-shadow: 0 1px 3px rgba(0, 0, 0, .35);
}
.tile svg { width: 50px; height: 50px; margin: -1px; }
.t-glass { background: linear-gradient(rgba(255, 230, 220, .32), rgba(255, 230, 220, .1) 50%, rgba(255, 230, 220, .15)); }
.t-dash { background: linear-gradient(#b7806f, #8c3a26 35%, #84371f); }
.t-chrome { background: linear-gradient(#cfc487, #a38a31 50%, #ad973b); }
.t-atom { background: linear-gradient(#7ecb93, #2fa25b 50%, #48ad68); }
.t-gimp { background: linear-gradient(#d9b980, #b78637 45%, #b98c3c); }
.t-trash { margin-top: auto; }
.glyph-r { font: 27px "Liberation Serif", serif; fill: #fff; stroke: #fff; stroke-width: .5px; }
.glyph-s { font: 900 23px Lato, "Liberation Sans", sans-serif; fill: #2e2130; }
.pip { position: absolute; border: 4px solid transparent; }
.pip-chrome { left: 0; top: 84px; border-left-color: #dcd6d2; border-right: 0; }
.pip-chrome-on { right: -1px; top: 84px; border-right-color: #dcd6d2; border-left: 0; }
.pip-atom { left: 0; top: 255px; border-left-color: #dcd6d2; border-right: 0; }
.pip-two { position: absolute; left: 0; top: 825px; width: 4px; height: 7px; border: solid #dcd6d2; border-width: 2px 0; }

/* Browser chrome */
.window { flex: 1; min-width: 0; background: #fff; }
.tabs {
  display: flex;
  height: 28px;
  padding-left: 6px;
  background: linear-gradient(#4a6e88, #3c617b 50%, #3c617a);
  color: #fff;
  font: 14.5px/28px "Noto Sans", "Open Sans", sans-serif;
}
.tab { position: relative; display: flex; align-items: center; width: 206px; margin-right: -13px; padding-left: 14px; }
.tab.on { z-index: 1; }
.shape { position: absolute; left: 0; top: 0; width: 206px; height: 28px; fill: url(#g-tab); stroke: #7391a3; }
.on .shape { fill: url(#g-tab-on); stroke: #8799a4; }
.fav { position: relative; width: 16px; height: 16px; flex: none; margin-top: 2px; text-align: center; }
.medium { background: #151515; font: 700 13px/16px "Liberation Serif", serif; }
.perl { background: #0a7a28; color: #fe0; font: 700 16px/16px "Liberation Sans", sans-serif; }
.label {
  position: relative;
  width: 134px;
  margin-left: 6px;
  overflow: hidden;
  white-space: nowrap;
  letter-spacing: -.2px;
  -webkit-mask-image: linear-gradient(90deg, #000 100px, transparent 134px);
  mask-image: linear-gradient(90deg, #000 100px, transparent 134px);
}
.close { position: relative; width: 8px; height: 8px; margin: 3px 0 0 9px; overflow: visible; fill: none; stroke: #eef2f4; stroke-width: 1.8; }
.on .close { stroke: #c9cfd3; }
.newtab { margin: 7px 0 0 10px; }
.profile { width: 37px; height: 17px; margin: 3px 1px 0 auto; border: 1px solid #6f93a8; border-radius: 2px; font-size: 12.500px; line-height: 15px; text-align: center; text-shadow: 0 1px 1px #123; }
.toolbar {
  height: 65px;
  border-top: 1px solid #8395a1;
  border-bottom: 1px solid #2b3e4b;
  background: linear-gradient(#6c7e8b, #50687a 50%, #3e566a);
}
.nav-row { display: flex; align-items: center; height: 36px; padding-left: 11px; }
.nav-ic { margin-right: 14px; fill: none; stroke: #5f686f; stroke-width: 2; }
.nav-ic.faint { stroke: #657681; }
.nav-row .nav-ic:nth-child(3) { margin-right: 9px; margin-left: -1px; }
.omnibox {
  display: flex;
  align-items: center;
  width: 1637px;
  height: 28px;
  padding-left: 9px;
  padding-right: 6px;
  border: 1px solid #405260;
  border-radius: 3px;
  background: #fff;
  color: #777;
  font: 14px/26px "Noto Sans", "Open Sans", sans-serif;
  white-space: nowrap;
}
.cert { width: 103px; margin-left: 9px; color: #0b8043; letter-spacing: -.38px; }
.bar { width: 1px; height: 16px; margin: 0 10px 0 7px; background: #aaa; }
.url { letter-spacing: -.2px; }
.url b { font-weight: 400; }
.url .s { color: #0b8043; }
.url .h { color: #111; }
.zoom { margin: 0 11px 0 auto; }
.e1 { margin-left: 10px; }
.e2 { margin-left: 19px; }
.e3 { margin-left: 17px; }
.e4 { margin-left: 22px; }
.marks { display: flex; align-items: center; height: 26px; padding-left: 11px; color: #fff; font: 14.500px/24px "Noto Sans", "Open Sans", sans-serif; white-space: nowrap; }
.marks > svg { width: 16px; height: 16px; margin-right: 12.020px; }
.marks .apps { width: 14px; height: 14px; margin-right: 14px; }
.marks .pg { width: 11px; margin: 0 14px 0 3px; }
.marks > span { padding-bottom: 2px; }
.w-apps { width: 46px; }
.w-dash { width: 47px; }
.w-tril { width: 58px; }
.marks .hash { width: 16px; height: 16px; margin-right: 12px; padding: 0; background: #4b2b4b; font-weight: 700; font-size: 13px; line-height: 16px; text-align: center; }
.sep { width: 1px; height: 16px; margin-left: auto; background: #4e6576; }
.marks .folder { width: 14px; height: 12px; margin: 0 13px 0 11px; }
.w-other { width: 131px; }

/* Site header */
a { color: #4200d9; }
.gh-head { display: flex; align-items: flex-start; height: 62px; padding: 13px 0 0 390px; background: #292c34; }
.gh-head > svg { fill: #d0d1d3; }
.gh-head .logo { fill: #fff; }
.search { display: flex; align-items: center; justify-content: space-between; width: 330px; height: 33px; margin-left: 14px; padding: 0 9px 0 8.500px; border-radius: 3px; background: #43464a; color: #97999b; line-height: 33px; }
.gh-head nav { display: flex; gap: 17.700px; width: 343px; margin-left: 17.500px; font-weight: 700; line-height: 35px; white-space: nowrap; }
.gh-head nav a { flex: none; color: #d0d1d3; }
.bell { margin: 9px 0 0 220px; }
.plus { margin: 10px 0 0 20px; }
.caret { border: 4.400px solid transparent; border-top-color: currentColor; border-bottom: 0; }
.gh-head .caret { color: #d0d1d3; }
.c1 { margin: 18px 0 0 6px; }
.me { margin: 8px 0 0 17.500px; }
.c2 { margin: 17px 0 0 5px; }

/* Repository header */
.wrap { width: 1078px; margin-left: 390px; }
.repo-head { height: 114px; border-bottom: 1px solid #dfe1e7; background: #fafbfd; }
.title-row { display: flex; height: 70px; padding-top: 22px; }
.title-row > svg { margin-top: 5px; }
h1 { display: flex; margin: 0 0 0 6px; font-size: 19.800px; font-weight: 400; line-height: 28px; }
h1 i { margin: 0 5px; color: #596070; font-style: normal; }
h1 .strong { font-weight: 700; }
.social { display: flex; gap: 11px; margin-left: auto; font-size: 13.200px; font-weight: 700; }
.social .group { height: 30px; }
.group { display: flex; }
.btn {
  display: flex;
  align-items: center;
  justify-content: center;
  height: 31px;
  border: 1px solid #c8cbd1;
  border-radius: 3px;
  background: linear-gradient(#fafbfd, #eceff4);
  color: #292d35;
  font-size: 13.200px;
  font-weight: 700;
  line-height: 28px;
  padding-bottom: 1px;
  white-space: nowrap;
}
.social .btn { height: 30px; padding-bottom: 0; border-radius: 3px 0 0 3px; }
.social .btn svg { margin: 2px 4px 0 0; fill: #292d35; }
.btn .caret { margin: 0 0 1px 4px; }
.num { width: 31px; border: 1px solid #d4d6dc; border-left: 0; border-radius: 0 3px 3px 0; background: #fff; line-height: 28px; text-align: center; }
.w-watch { width: 96px; }
.w-star { width: 68px; }
.w-fork { width: 53px; }
.repo-nav { display: flex; height: 44px; color: #5c6271; }
.repo-nav a { display: flex; align-items: center; height: 44px; margin-right: 1.250px; padding: 2px 15px 1px 17px; color: inherit; border: solid transparent; border-width: 0 1px; line-height: 39px; white-space: nowrap; }
.repo-nav svg { margin: -1px 4px 0 0; fill: #bbbec5; }
.repo-nav a.on { width: 91px; margin-right: 0; padding: 0 15px 2px 16px; border: 1px solid #dfe1e7; border-width: 3px 1px 0; border-top-color: #e85f0c; border-radius: 3px 3px 0 0; background: #fff; color: #292d35; }
.repo-nav .on svg { fill: #292d35; }
.repo-nav b { height: 17px; margin: 2px 0 0 4.500px; padding: 0 5.500px; border-radius: 20px; background: #e7e9ed; color: #454b57; font-size: 13.200px; line-height: 17px; }

/* Main */
.desc { display: flex; justify-content: space-between; height: 93px; padding-top: 22px; }
.desc p { margin: 0; color: #5c6271; font-size: 17.600px; font-style: italic; line-height: 26px; }
.desc a { display: block; margin-top: 8px; font-size: 13.200px; line-height: 20px; }
.edit { width: 50px; }
.stats { display: grid; grid-template-columns: repeat(4, 1fr); height: 47px; border: 1px solid #dfe1e7; border-radius: 3px; color: #5c6271; }
.stats div { display: flex; align-items: center; justify-content: center; padding-right: 2px; line-height: 45px; }
.stats svg { margin-right: 3.500px; fill: #6b7180; }
.stats b { margin-right: 4.300px; color: #292d35; }
.actions { display: flex; height: 59px; padding-top: 17px; }
.actions .btn, .edit { line-height: 27px; padding-bottom: 2px; }
.btn em { margin-right: 4px; color: #6c7280; font-style: normal; font-weight: 400; }
.w-branch { width: 129px; }
.w-newpr { width: 130px; margin-left: 6px; }
.files { margin: 0 6px 0 auto; }
.files .btn + .btn { border-left: 0; border-radius: 0; }
.files .btn:first-child { border-radius: 3px 0 0 3px; }
.files .btn:last-child { border-radius: 0 3px 3px 0; }
.w-create { width: 117px; }
.w-upload { width: 98px; }
.w-find { width: 74px; }
.btn.green { width: 156px; border-color: #12853d; background: linear-gradient(#00e255, #00ae40); color: #fff; }
.commit { display: flex; align-items: center; height: 48px; padding: 0 11px 3px; border: 1px solid #c9d5fb; border-radius: 3px 3px 0 0; background: #f1f6ff; color: #5c6271; font-size: 13.200px; }
.commit b { margin: 0 4px 0 6px; color: #292d35; }
.latest { margin-left: auto; padding-top: 1px; font-size: 14.300px; }
.latest code { font: 13.200px "Liberation Mono", monospace; }
.file { display: flex; align-items: center; height: 35px; padding: 0 12.500px 2px 11px; border: 1px solid #dfe1e7; border-top: 0; border-radius: 0 0 3px 3px; background: #f5f6fa; color: #6c7280; }
.file svg { fill: #8b86b0; }
.file a { width: 449.500px; margin-left: 5.500px; }
.age { margin-left: auto; }
.readme { height: 196px; margin-top: 11px; border: 1px solid #d5d7dc; border-radius: 3px; }
.readme h3 { display: flex; align-items: center; height: 41px; margin: 0; padding: 0 11px 1px; border-bottom: 1px solid #d5d7dc; background: #f5f6fa; font-size: 15.400px; }
.readme h3 svg { margin-right: 4px; fill: #292d35; }
.readme article { padding: 49px 50px 0 49px; }
h2 { height: 55px; margin: 0; border-bottom: 1px solid #e9ebee; font-size: 35.200px; line-height: 44px; }

/* Footer */
footer { display: flex; align-items: flex-start; height: 100px; margin-top: 77px; padding-top: 44px; border-top: 1px solid #e9ebee; font-size: 13.200px; line-height: 20px; color: #5c6271; }
footer > svg { margin-left: 159px; }
.links { display: flex; gap: 17.600px; margin-left: -.5px; white-space: nowrap; }
.right { margin-left: auto; }
```
